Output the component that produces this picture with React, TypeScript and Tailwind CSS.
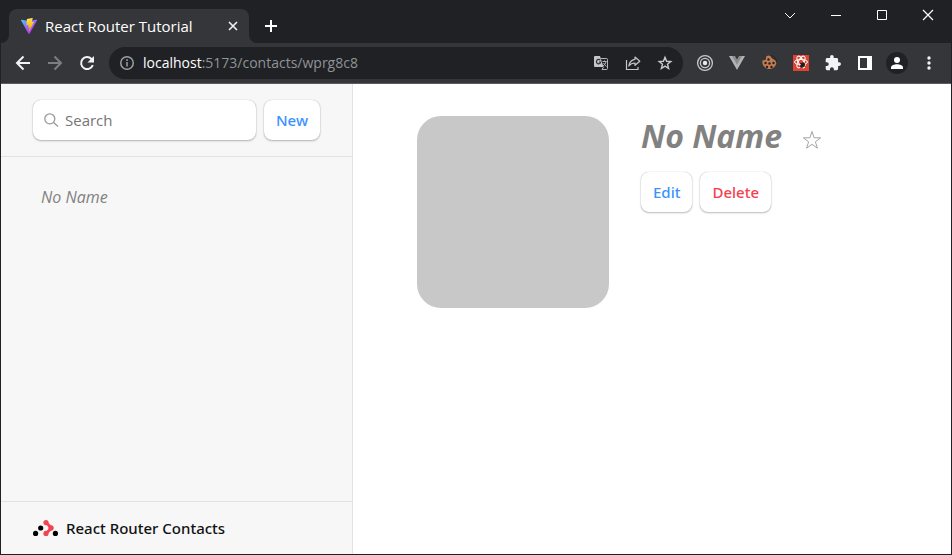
import type { ReactNode } from "react";

function IconButton({ label, children }: { label: string; children: ReactNode }) {
  return (
    <button type="button" aria-label={label} className="flex h-8 w-8 shrink-0 items-center justify-center">
      {children}
    </button>
  );
}

function WindowButton({ label, children }: { label: string; children: ReactNode }) {
  return (
    <button type="button" aria-label={label} className="flex h-[30px] w-[46px] items-center justify-center">
      <svg width="12" height="12" viewBox="0 0 12 12" fill="none" stroke="#fff" className="block">
        {children}
      </svg>
    </button>
  );
}

function ViteLogo() {
  return (
    <svg width="16" height="16" viewBox="0 0 32 32" className="shrink-0" aria-hidden="true">
      <defs>
        <linearGradient id="vite-body" x1="0" y1="0" x2="20" y2="28" gradientUnits="userSpaceOnUse">
          <stop stopColor="#41d1ff" />
          <stop offset="1" stopColor="#bd34fe" />
        </linearGradient>
        <linearGradient id="vite-bolt" x1="16" y1="2" x2="19" y2="23" gradientUnits="userSpaceOnUse">
          <stop stopColor="#ffea83" />
          <stop offset="0.1" stopColor="#ffdd35" />
          <stop offset="1" stopColor="#ffa800" />
        </linearGradient>
      </defs>
      <path fill="url(#vite-body)" d="M31.9 4.9 17 31.3a1.1 1.1 0 0 1-1.9 0L.1 4.9A1.1 1.1 0 0 1 1.200 3.300l14.800 2.600 14.700-2.600a1.100 1.100 0 0 1 1.200 1.600z" />
      <path fill="url(#vite-bolt)" d="m23 0-11 2.200a.4.4 0 0 0-.3.4L11 14a.4.4 0 0 0 .5.4l3.100-.7a.4.4 0 0 1 .5.5l-.9 4.500a.4.4 0 0 0 .5.5l1.900-.6a.4.400 0 0 1 .5.5l-1.400 7.000c-.1.400.5.700.7.300l9.500-18.300a.4.400 0 0 0-.5-.600l-3.200.6a.4.400 0 0 1-.5-.500L23.500.5A.4.400 0 0 0 23 0z" />
    </svg>
  );
}

function TabStrip() {
  return (
    <div className="flex h-[43px] items-start bg-[#202124]">
      <div className="flex h-full min-w-0 flex-1 items-end pl-2">
        <div className="relative flex h-[34px] w-60 items-center rounded-t-lg bg-[#35363a] pl-3 pr-2">
          <svg className="absolute -left-2 bottom-0" width="8" height="8" viewBox="0 0 8 8" aria-hidden="true">
            <path d="M8 0v8H0a8 8 0 0 0 8-8z" fill="#35363a" />
          </svg>
          <svg className="absolute -right-2 bottom-0" width="8" height="8" viewBox="0 0 8 8" aria-hidden="true">
            <path d="M0 0v8h8a8 8 0 0 1-8-8z" fill="#35363a" />
          </svg>
          <ViteLogo />
          <span className="ml-2 flex-1 truncate text-[15px] leading-5 text-white">React Router Tutorial</span>
          <button type="button" aria-label="Close tab" className="flex h-4 w-4 items-center justify-center">
            <svg width="10" height="10" viewBox="0 0 10 10" stroke="#f1f3f4" strokeWidth="1.600">
              <path d="m1 1 8 8M9 1 1 9" />
            </svg>
          </button>
        </div>
        <button type="button" aria-label="New tab" className="ml-1.5 flex h-[34px] w-8 items-center justify-center">
          <svg width="12" height="12" viewBox="0 0 12 12" stroke="#fff" strokeWidth="2">
            <path d="M6 0v12M0 6h12" />
          </svg>
        </button>
      </div>
      <WindowButton label="Search tabs"><path d="m1 4 5 5 5-5" /></WindowButton>
      <WindowButton label="Minimize"><path d="M1 6.500h10" /></WindowButton>
      <WindowButton label="Maximize"><path d="M1.500 1.500h9v9h-9z" /></WindowButton>
      <WindowButton label="Close window"><path d="m1 1 10 10M11 1 1 11" strokeWidth="1.200" /></WindowButton>
    </div>
  );
}

function AddressBar() {
  return (
    <div className="flex h-8 min-w-0 flex-1 items-center rounded-full bg-[#202124] pl-2.5 pr-0.5">
      <svg width="16" height="16" viewBox="0 0 16 16" fill="none" stroke="#9aa0a6" strokeWidth="1.500" className="shrink-0" aria-hidden="true">
        <circle cx="8" cy="8" r="6.250" />
        <path d="M8 7v4.500M8 4.300v1.600" />
      </svg>
      <span className="ml-2 flex-1 truncate text-[14px] leading-5 text-[#8f9397]">
        <span className="text-white">localhost</span>:5173/contacts/wprg8c8
      </span>
      <IconButton label="Translate this page">
        <svg width="16" height="16" viewBox="0 0 16 16" fill="none">
          <path d="M2 1h5l3.500 11H2a1 1 0 0 1-1-1V2a1 1 0 0 1 1-1z" fill="#c4c7c9" />
          <path d="M8 3.500h5.500a1 1 0 0 1 1 1v9a1 1 0 0 1-1 1H9l1.500-2.500" stroke="#b4b7ba" />
          <path d="M7.300 5.200A2.200 2.200 0 1 0 7.800 7H5.800" stroke="#303134" strokeWidth="1.200" />
          <path d="M9.500 6.500h4M11.500 5.500v1M13 6.500c-.3 2-1.500 3.500-3 4.500M10.500 8c.7 1.500 1.800 2.500 3 3.500" stroke="#b4b7ba" />
        </svg>
      </IconButton>
      <IconButton label="Share this page">
        <svg width="16" height="16" viewBox="0 0 16 16" fill="none" stroke="#c4c7c9" strokeWidth="1.200">
          <path d="M1.500 5v9.500H13V12" />
          <path d="M10 2l4.800 4.200L10 10.300V8C7.300 8 5.300 8.900 3.800 11 4.300 7.300 6.400 4.800 10 4.300z" strokeLinejoin="round" />
        </svg>
      </IconButton>
      <IconButton label="Bookmark this tab">
        <svg width="16" height="16" viewBox="0 0 16 16" fill="none" stroke="#c8cacc" strokeWidth="1.400">
          <path d="m8 2.300 1.600 4 4.200.3-3.300 2.700 1.100 4.200L8 11.200l-3.600 2.300 1.100-4.200-3.300-2.700 4.200-.3z" />
        </svg>
      </IconButton>
    </div>
  );
}

function Extensions() {
  return (
    <div className="flex items-center">
      <IconButton label="Target">
        <svg width="18" height="18" viewBox="0 0 18 18" fill="none" stroke="#c8c9ca">
          <circle cx="9" cy="9" r="7.400" strokeWidth="1.300" />
          <circle cx="9" cy="9" r="4.600" strokeWidth="1.300" />
          <circle cx="9" cy="9" r="2.200" fill="#e8e8e8" stroke="none" />
        </svg>
      </IconButton>
      <IconButton label="Vue devtools">
        <svg width="16" height="14" viewBox="0 0 16 14">
          <path d="M0 0h16L8 14z" fill="#b3b3b3" />
          <path d="M3 0h10L8 8.700z" fill="#8c8c8c" />
          <path d="M6 0h4L8 3.500z" fill="#35363a" />
        </svg>
      </IconButton>
      <IconButton label="Cookie editor">
        <svg width="16" height="16" viewBox="0 0 16 16">
          <path d="M5.500 1 9 .5l2 3 3.500 2 .8 3A7 7 0 1 1 1.500 5.500L4.500 5z" fill="#c37b50" />
          <g fill="#222326">
            <circle cx="7.500" cy="4.500" r="1.200" />
            <circle cx="4.500" cy="8" r="1.200" />
            <circle cx="8.500" cy="8.500" r="1.200" />
            <circle cx="12.500" cy="8" r="1.200" />
            <circle cx="6" cy="12" r="1.200" />
            <circle cx="10.500" cy="12" r="1.200" />
          </g>
          <path d="M9 .5c3.500 0 6 2.500 6.500 6" stroke="#222326" fill="none" />
        </svg>
      </IconButton>
      <IconButton label="React developer tools">
        <svg width="16" height="16" viewBox="0 0 16 16" fill="none">
          <path d="M0 0h16v16H0z" fill="#dc4332" />
          <g stroke="#fff" strokeWidth="1">
            <ellipse cx="8" cy="7" rx="6.500" ry="2.600" />
            <ellipse cx="8" cy="7" rx="6.500" ry="2.600" transform="rotate(60 8 7)" />
            <ellipse cx="8" cy="7" rx="6.500" ry="2.600" transform="rotate(120 8 7)" />
          </g>
          <ellipse cx="9.500" cy="10" rx="1.900" ry="3" fill="#26191a" transform="rotate(30 9.500 10)" />
          <path d="m7 8 5.500 3.500M7 12l5-3" stroke="#26191a" />
        </svg>
      </IconButton>
      <IconButton label="Extensions">
        <svg width="16" height="16" viewBox="1 1 22 22" fill="#f1f3f4">
          <path d="M20.500 11H19V7a2 2 0 0 0-2-2h-4V3.500a2.500 2.500 0 0 0-5 0V5H4a2 2 0 0 0-2 2v3.800h1.500a2.700 2.700 0 0 1 0 5.400H2V20a2 2 0 0 0 2 2h3.800v-1.500a2.700 2.700 0 0 1 5.400 0V22H17a2 2 0 0 0 2-2v-4h1.500a2.500 2.500 0 0 0 0-5z" />
        </svg>
      </IconButton>
      <IconButton label="Side panel">
        <svg width="14" height="14" viewBox="0 0 14 14">
          <path fillRule="evenodd" d="M0 0h14v14H0zM2 2v10h7V2z" fill="#fff" />
        </svg>
      </IconButton>
      <IconButton label="Profile">
        <svg width="22" height="22" viewBox="0 0 22 22">
          <circle cx="11" cy="11" r="11" fill="#202124" />
          <circle cx="11" cy="8" r="3" fill="#fff" />
          <path d="M5 17v-1.500C5 13.500 8.500 12.300 11 12.300s6 1.200 6 3.200V17z" fill="#fff" />
        </svg>
      </IconButton>
      <IconButton label="Browser menu">
        <svg width="4" height="14" viewBox="0 0 4 14" fill="#f1f3f4">
          <circle cx="2" cy="2" r="1.700" />
          <circle cx="2" cy="7" r="1.700" />
          <circle cx="2" cy="12" r="1.700" />
        </svg>
      </IconButton>
    </div>
  );
}

function Toolbar() {
  return (
    <div className="flex h-[41px] items-center gap-1.5 border-b border-[#5b5c5f] bg-[#35363a] px-1.5">
      <div className="flex">
        <IconButton label="Back">
          <svg width="16" height="16" viewBox="0 0 16 16" fill="none" stroke="#f1f3f4" strokeWidth="2">
            <path d="M15 8H2M8.500 1.500 2 8l6.500 6.500" />
          </svg>
        </IconButton>
        <IconButton label="Forward">
          <svg width="16" height="16" viewBox="0 0 16 16" fill="none" stroke="#7d7e81" strokeWidth="2">
            <path d="M1 8h13M7.500 1.500 14 8l-6.500 6.500" />
          </svg>
        </IconButton>
        <IconButton label="Reload">
          <svg width="16" height="16" viewBox="0 0 16 16" fill="none" stroke="#f1f3f4" strokeWidth="2">
            <path d="M13.800 10A6 6 0 1 1 12.500 4L14 5.500" />
            <path d="M15 1v6.500H8.500z" fill="#f1f3f4" stroke="none" />
          </svg>
        </IconButton>
      </div>
      <AddressBar />
      <Extensions />
    </div>
  );
}

const raised = "h-10 rounded-lg bg-white shadow-[0_0_1px_rgba(0,0,0,0.3),0_1px_2px_rgba(0,0,0,0.25)]";
const action = `${raised} px-3 font-['Noto_Sans','Open_Sans',sans-serif] text-[15px] font-medium`;

function Sidebar() {
  return (
    <aside className="flex w-[352px] shrink-0 flex-col border-r border-[#e3e3e3] bg-[#f7f7f7]">
      <div className="flex gap-2 border-b border-[#e3e3e3] px-8 py-4">
        <form role="search" className="relative min-w-0 flex-1">
          <svg className="absolute left-[11px] top-3" width="16" height="16" viewBox="0 0 16 16" fill="none" stroke="#999" strokeWidth="1.300" aria-hidden="true">
            <circle cx="5.800" cy="6.800" r="5" />
            <path d="m9.500 10.500 4.500 4" />
          </svg>
          <input type="search" aria-label="Search contacts" placeholder="Search" className={`${raised} block w-full pl-8 pr-3 text-[15px] outline-none placeholder:text-[#757575]`} />
        </form>
        <button type="button" className={`${action} text-[#3992ff]`}>New</button>
      </div>
      <nav className="flex-1 px-8 pt-5">
        <a href="#contact" className="block rounded-lg p-2 text-[16px] leading-6 text-[#818181]"><i>No Name</i></a>
      </nav>
      <div className="flex h-[53px] items-center border-t border-[#e3e3e3] px-8">
        <svg width="25" height="16" viewBox="0 0 25 16" aria-hidden="true">
          <path d="M13 2.500l5.500 5.500L13 13.500" fill="none" stroke="#f44250" strokeWidth="3" strokeLinejoin="round" />
          <g fill="#f44250">
            <circle cx="13" cy="2.600" r="2.600" />
            <circle cx="18" cy="8" r="2.700" />
            <circle cx="13" cy="13.400" r="2.600" />
          </g>
          <circle cx="2.600" cy="13.400" r="2.600" />
          <circle cx="7.700" cy="8" r="2.600" />
          <circle cx="22.400" cy="13.400" r="2.600" />
        </svg>
        <h1 className="ml-2 font-['Noto_Sans','Open_Sans',sans-serif] text-[15px] font-medium leading-6 text-[#121212]">React Router Contacts</h1>
      </div>
    </aside>
  );
}

function Contact() {
  return (
    <main className="flex min-w-0 flex-1 items-start gap-8 bg-white px-16 py-8">
      <div className="h-48 w-48 shrink-0 rounded-3xl bg-[#c8c8c8]" />
      <div>
        <div className="flex h-10 items-center gap-5">
          <h2 className="text-[32px] font-bold leading-10 text-[#818181]"><i>No Name</i></h2>
          <button type="button" aria-label="Add to favorites" className="pt-2">
            <svg width="20" height="22" viewBox="1 0 20 22" fill="none" stroke="#a4a4a4">
              <path d="m11 2.500 2.100 6.300h6.600l-5.300 4 2 6.400-5.400-3.900-5.400 3.900 2-6.400-5.300-4h6.600z" />
            </svg>
          </button>
        </div>
        <div className="mt-4 flex gap-2">
          <button type="button" className={`${action} text-[#3992ff]`}>Edit</button>
          <button type="button" className={`${action} text-[#f44250]`}>Delete</button>
        </div>
      </div>
    </main>
  );
}

export default function App() {
  return (
    <div className="flex min-h-screen flex-col border-x border-b border-[#202124] font-['Open_Sans','Noto_Sans',sans-serif]">
      <header>
        <TabStrip />
        <Toolbar />
      </header>
      <div className="flex flex-1">
        <Sidebar />
        <Contact />
      </div>
    </div>
  );
}
